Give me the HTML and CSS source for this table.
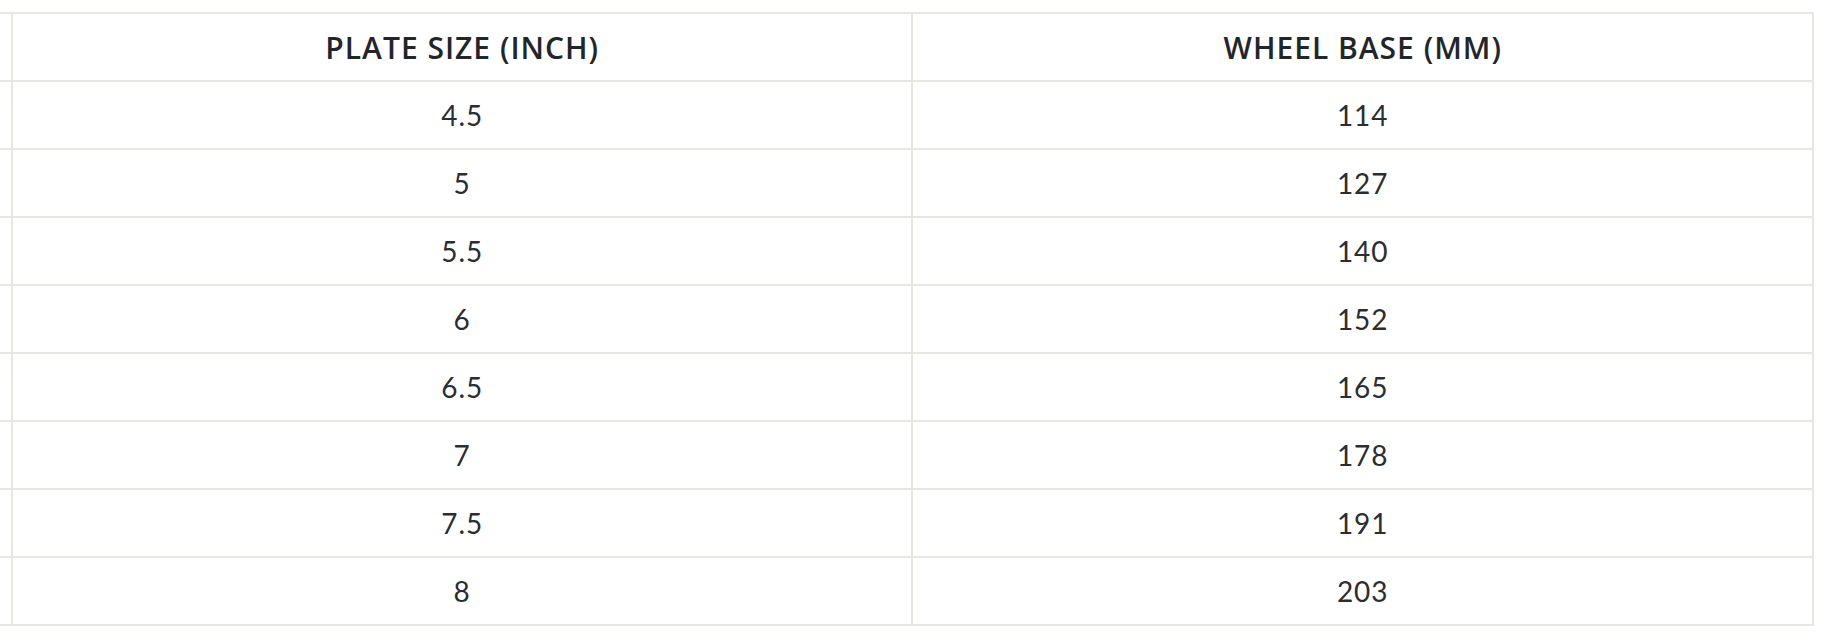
FILE: index.html
```html
<!DOCTYPE html>
<html lang="en">
<head>
<meta charset="utf-8">
<title>Plate size and wheel base</title>
<link rel="stylesheet" href="styles.css">
</head>
<body>
<div class="wrap">
<table class="sizes">
<thead>
<tr><th class="cut"></th><th>Plate Size (Inch)</th><th>Wheel Base (mm)</th></tr>
</thead>
<tbody>
<tr><td class="cut"></td><td>4.5</td><td>114</td></tr>
<tr><td class="cut"></td><td>5</td><td>127</td></tr>
<tr><td class="cut"></td><td>5.5</td><td>140</td></tr>
<tr><td class="cut"></td><td>6</td><td>152</td></tr>
<tr><td class="cut"></td><td>6.5</td><td>165</td></tr>
<tr><td class="cut"></td><td>7</td><td>178</td></tr>
<tr><td class="cut"></td><td>7.5</td><td>191</td></tr>
<tr><td class="cut"></td><td>8</td><td>203</td></tr>
</tbody>
</table>
</div>
</body>
</html>
```
FILE: styles.css
```css
html, body {
  margin: 0;
  padding: 0;
  background: #ffffff;
}
body {
  font-family: Lato, "Open Sans", "Liberation Sans", sans-serif;
  color: #212529;
}
.wrap {
  padding-top: 12px;
}
.sizes {
  border-collapse: separate;
  border-spacing: 0;
  table-layout: fixed;
  width: 1814px;
  border-top: 2px solid #e8e7e1;
}
.sizes th,
.sizes td {
  height: 66px;
  padding: 0;
  text-align: center;
  vertical-align: middle;
  border-right: 2px solid #e8e7e1;
  border-bottom: 2px solid #e8e7e1;
  box-sizing: content-box;
  width: 898px;
}
.sizes th {
  font-family: "Open Sans", Lato, sans-serif;
  font-size: 30px;
  font-weight: 600;
  letter-spacing: 1px;
  text-transform: uppercase;
  color: #22262b;
}
.sizes td {
  font-size: 28px;
  font-weight: 400;
  letter-spacing: 1px;
  color: #2a2d31;
}
.sizes .cut {
  width: 11px;
}
```
